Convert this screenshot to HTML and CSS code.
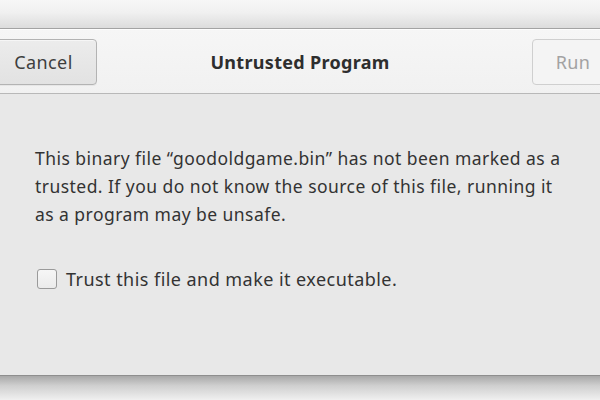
FILE: index.html
```html
<!DOCTYPE html>
<html>
<head>
<meta charset="utf-8">
<link rel="stylesheet" href="styles.css">
</head>
<body>
<div class="wall-top"></div>
<div class="dialog">
  <header class="headerbar">
    <button class="btn btn-cancel">Cancel</button>
    <div class="title">Untrusted Program</div>
    <button class="btn btn-run" disabled>Run</button>
  </header>
  <main class="content">
    <p class="message">This binary file “goodoldgame.bin” has not been marked as a trusted. If you do not know the source of this file, running it as a program may be unsafe.</p>
    <label class="check">
      <span class="box"></span>
      <span class="check-label">Trust this file and make it executable.</span>
    </label>
  </main>
</div>
<div class="wall-bottom"></div>
</body>
</html>
```
FILE: styles.css
```css
html, body {
  margin: 0;
  padding: 0;
  width: 600px;
  height: 400px;
  overflow: hidden;
  font-family: "Noto Sans", "Open Sans", sans-serif;
  background: #e8e8e8;
}
body {
  display: flex;
  flex-direction: column;
}
.wall-top {
  height: 28px;
  flex: none;
  background: linear-gradient(to bottom, #f7f7f7 0%, #f0f0f0 45%, #dcdcdc 100%);
  border-bottom: 1px solid #a3a3a3;
}
.dialog {
  flex: none;
  display: flex;
  flex-direction: column;
}
.headerbar {
  height: 65px;
  box-sizing: border-box;
  display: grid;
  grid-template-columns: 1fr auto 1fr;
  align-items: center;
  background: linear-gradient(to bottom, #f6f6f6, #f1f1f1);
  border-bottom: 1px solid #b8b8b8;
  box-shadow: inset 0 1px 0 #fdfdfd;
  padding-top: 1px;
}
.btn {
  height: 46px;
  box-sizing: border-box;
  border-radius: 4px;
  font-family: inherit;
  font-size: 18px;
  letter-spacing: 0.4px;
  padding: 0;
}
.btn-cancel {
  justify-self: start;
  width: 107px;
  margin-left: -10px;
  color: #3e3e3e;
  border: 1px solid #b3b3b3;
  background: linear-gradient(to bottom, #ececec, #e2e2e2);
  box-shadow: inset 0 1px 0 #f6f6f6, 0 1px 0 #e6e6e6;
}
.btn-run {
  justify-self: end;
  width: 82px;
  margin-right: -14px;
  color: #a2a2a2;
  border: 1px solid #cfcfcf;
  background: #f4f4f4;
}
.title {
  font-weight: bold;
  font-size: 18px;
  letter-spacing: 0.3px;
  color: #2e2e2e;
}
.content {
  height: 282px;
  box-sizing: border-box;
  background: #e8e8e8;
  padding: 50px 0 0 35px;
  border-bottom: 1px solid #8e8e8e;
}
.message {
  margin: 0;
  width: 532px;
  font-size: 17.5px;
  letter-spacing: 0.45px;
  line-height: 28px;
  color: #333333;
}
.check {
  display: flex;
  align-items: center;
  gap: 9px;
  margin-top: 39px;
  margin-left: 2px;
}
.box {
  width: 20px;
  height: 20px;
  box-sizing: border-box;
  border: 1px solid #9a9a9a;
  border-radius: 3px;
  background: linear-gradient(to bottom, #f6f6f6, #ebebeb);
}
.check-label {
  font-size: 18px;
  letter-spacing: 0.45px;
  color: #333333;
}
.wall-bottom {
  flex: 1;
  background: linear-gradient(to bottom, #a8a8a8 0%, #cfcfcf 40%, #f0f0f0 100%);
}
```
